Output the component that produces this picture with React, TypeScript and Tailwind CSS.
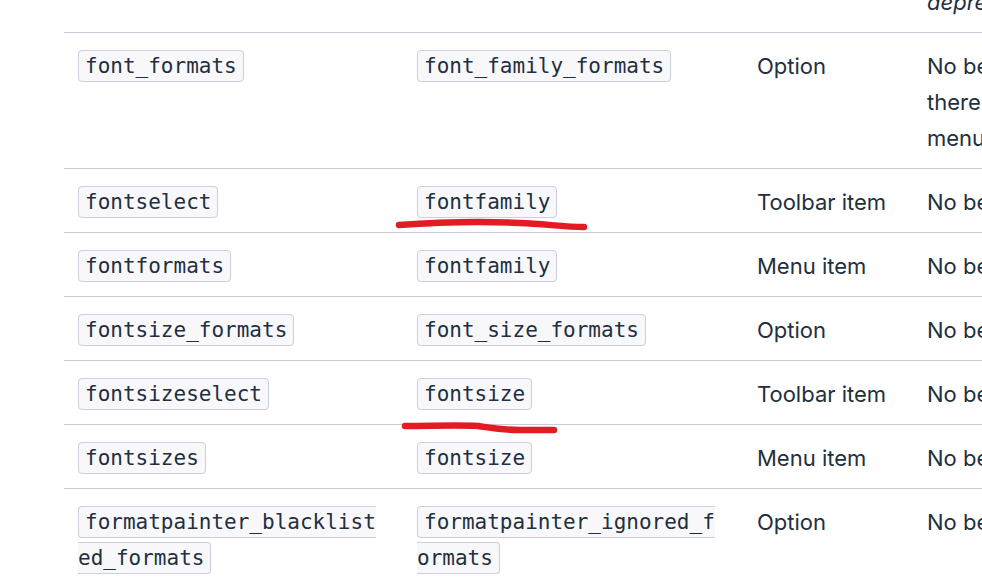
const Code = ({ children }: { children: string }) => (
  <code className="rounded-[4px] border border-[#cbcfdc] bg-[#f8f8fb] px-[6px] py-[3px] font-['DejaVu_Sans_Mono',monospace] text-[21px] text-[#222f3e] [overflow-wrap:anywhere]">
    {children}
  </code>
);

const rows = [
  {
    oldName: "font_formats",
    newName: "font_family_formats",
    type: "Option",
    notes: (
      <>
        No behavior changes, however
        <br />
        there is now a separate
        <br />
        menu item
      </>
    ),
  },
  { oldName: "fontselect", newName: "fontfamily", type: "Toolbar item", notes: "No behavior changes" },
  { oldName: "fontformats", newName: "fontfamily", type: "Menu item", notes: "No behavior changes" },
  { oldName: "fontsize_formats", newName: "font_size_formats", type: "Option", notes: "No behavior changes" },
  { oldName: "fontsizeselect", newName: "fontsize", type: "Toolbar item", notes: "No behavior changes" },
  { oldName: "fontsizes", newName: "fontsize", type: "Menu item", notes: "No behavior changes" },
  {
    oldName: "formatpainter_blacklisted_formats",
    newName: "formatpainter_ignored_formats",
    type: "Option",
    notes: "No behavior changes",
  },
];

export default function App() {
  return (
    <div className="relative h-[580px] w-[982px] overflow-hidden bg-white font-['Inter',sans-serif] text-[22px] leading-[36px] text-[#222f3e]">
      <div className="-mt-[31px] pl-[64px]">
        <table className="w-[1260px] table-fixed border-collapse text-left">
          <colgroup>
            <col className="w-[339px]" />
            <col className="w-[340px]" />
            <col className="w-[170px]" />
            <col />
          </colgroup>
          <tbody>
            <tr>
              <td className="px-[14px] pt-[15px] pb-[12px]" />
              <td className="px-[14px] pt-[15px] pb-[12px]" />
              <td className="px-[14px] pt-[15px] pb-[12px]" />
              <td className="px-[14px] pt-[15px] pb-[12px] align-top italic">deprecated</td>
            </tr>
            {rows.map((row) => (
              <tr key={row.oldName + row.type} className="border-t border-[#c7cbdc]">
                <td className="pl-[14px] pr-[24px] pt-[15px] pb-[12px] align-top font-['DejaVu_Sans_Mono',monospace] text-[21px]">
                  <Code>{row.oldName}</Code>
                </td>
                <td className="pl-[14px] pr-[24px] pt-[15px] pb-[12px] align-top font-['DejaVu_Sans_Mono',monospace] text-[21px]">
                  <Code>{row.newName}</Code>
                </td>
                <td className="px-[14px] pt-[15px] pb-[12px] align-top">{row.type}</td>
                <td className="px-[14px] pt-[15px] pb-[12px] align-top whitespace-nowrap">{row.notes}</td>
              </tr>
            ))}
          </tbody>
        </table>
      </div>

      {/* red pen marks drawn over the screenshot */}
      <svg
        className="pointer-events-none absolute inset-0"
        width="982"
        height="580"
        viewBox="0 0 982 580"
        fill="none"
      >
        <path
          d="M399 225 C 440 222, 480 221, 520 223 C 545 224, 565 227, 584 227"
          stroke="#e31c23"
          strokeWidth="6.5"
          strokeLinecap="round"
        />
        <path
          d="M405 426 C 430 426, 460 425, 478 426 C 492 428, 500 430, 520 430 C 535 430, 545 430, 554 430"
          stroke="#e31c23"
          strokeWidth="6.5"
          strokeLinecap="round"
        />
      </svg>
    </div>
  );
}
